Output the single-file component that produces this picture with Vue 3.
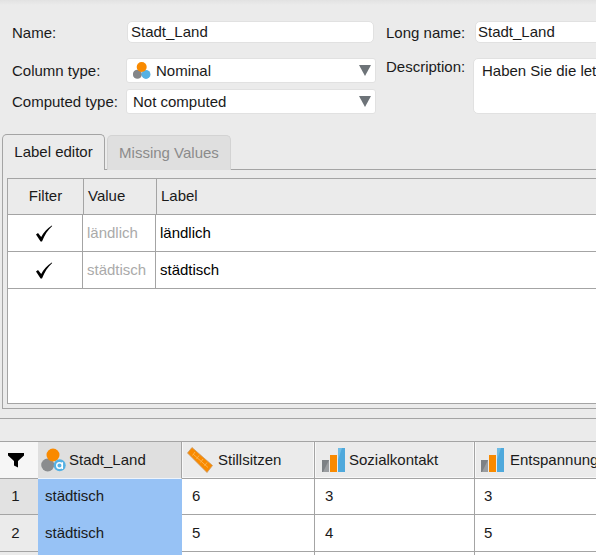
<template>
  <div class="app">
    <div class="form">
      <div class="form-left">
        <div class="field name-field">
          <label class="name-label">Name:</label>
          <div class="input name-input">Stadt_Land</div>
        </div>
        <div class="field type-field">
          <label class="type-label">Column type:</label>
          <div class="combo">
            <svg class="nominal-icon" width="18" height="18" viewBox="0 0 18 18">
              <circle cx="4.4" cy="12.2" r="4.5" fill="#848688" />
              <circle cx="13" cy="12.4" r="4.5" fill="#55b1e3" />
              <circle cx="8.7" cy="5" r="5" fill="#f98a00" />
            </svg>
            <span>Nominal</span>
            <i class="arrow"></i>
          </div>
        </div>
        <div class="field computed-field">
          <label class="type-label">Computed type:</label>
          <div class="combo">
            <span>Not computed</span>
            <i class="arrow"></i>
          </div>
        </div>
      </div>
      <div class="form-right">
        <div class="field name-field">
          <label class="long-label">Long name:</label>
          <div class="input long-input">Stadt_Land</div>
        </div>
        <div class="field desc-field">
          <label class="desc-label">Description:</label>
          <div class="textarea">Haben Sie die let</div>
        </div>
      </div>
    </div>

    <div class="tabs">
      <div class="tab active">Label editor</div>
      <div class="tab">Missing Values</div>
    </div>
    <div class="panel">
      <div class="labels">
        <div class="labels-head">
          <div class="lh-filter">Filter</div>
          <div class="lh-value">Value</div>
          <div class="lh-label">Label</div>
        </div>
        <div v-for="row in labels" :key="row" class="labels-row">
          <div class="lr-filter">
            <svg width="18" height="17" viewBox="0 0 18 17">
              <path d="M1 9.5 L3 8 L6.2 12 C8.5 7.5 12 3.5 16.8 0.5 L17.2 1 C12.8 5 9.5 10 7 16.5 L5.6 16.5 Z" fill="#000" />
            </svg>
          </div>
          <div class="lr-value">{{ row }}</div>
          <div class="lr-label">{{ row }}</div>
        </div>
      </div>
    </div>

    <div class="splitter"></div>

    <div class="data">
      <div class="data-head">
        <div class="corner">
          <svg width="18" height="16" viewBox="0 0 18 16">
            <path d="M1 1 H17 V3.5 L11 9 V15.5 L7 13.5 V9 L1 3.5 Z" fill="#000" />
          </svg>
        </div>
        <div v-for="col in columns" :key="col.name" class="col-head" :class="col.cls">
          <svg v-if="col.icon === 'nominal'" class="head-icon" width="25" height="24" viewBox="0 0 25 24">
            <circle cx="6.7" cy="17" r="6.5" fill="#8a8c8e" />
            <circle cx="12" cy="7" r="6.5" fill="#f98a00" />
            <circle cx="18.7" cy="17.3" r="6" fill="#55b1e3" />
            <circle cx="18.5" cy="17.5" r="2.8" fill="none" stroke="#fff" stroke-width="1.4" />
            <path d="M21.4 14.2 V21" stroke="#fff" stroke-width="1.3" />
          </svg>
          <svg v-else-if="col.icon === 'ruler'" class="head-icon" width="26" height="26" viewBox="0 0 26 26">
            <path d="M5 0.5 L25.5 18.5 L20 25.5 L0.5 6 Z" fill="#f98a00" stroke="#c99a66" stroke-width="0.8" />
            <path d="M6 7 L21 20.5 M8 5 L5.5 8.5 M12 8.5 L9.5 12 M16 12 L13.5 15.5 M20 15.5 L17.5 19" stroke="#fbb24f" stroke-width="1" fill="none" />
          </svg>
          <svg v-else class="head-icon" width="23" height="24" viewBox="0 0 23 24">
            <rect x="0" y="12" width="7" height="12" fill="#7d8185" />
            <path d="M7 12 V24 H1 Z" fill="#9a9da0" />
            <rect x="8" y="7" width="7" height="17" fill="#f98a00" />
            <rect x="16" y="0" width="7" height="24" fill="#4fa9dc" />
            <path d="M16 0 H20 L16 12 Z" fill="#6fbde6" />
          </svg>
          <span>{{ col.name }}</span>
        </div>
      </div>
      <div v-for="(row, i) in rows" :key="i" class="data-row" :class="'row-' + (i + 1)">
        <div class="row-num">{{ row.length ? i + 1 : '' }}</div>
        <div class="cell selected">{{ row.length ? 'städtisch' : '' }}</div>
        <div v-for="(col, j) in columns.slice(1)" :key="j" class="cell" :class="col.cls">{{ row[j] }}</div>
      </div>
    </div>
  </div>
</template>

<script setup>
const labels = ['ländlich', 'städtisch']

const columns = [
  { name: 'Stadt_Land', icon: 'nominal', cls: 'col-a' },
  { name: 'Stillsitzen', icon: 'ruler', cls: 'col-b' },
  { name: 'Sozialkontakt', icon: 'bars', cls: 'col-c' },
  { name: 'Entspannung', icon: 'bars', cls: 'col-d' }
]

// the third row only peeks in at the bottom edge
const rows = [
  [6, 3, 3],
  [5, 4, 5],
  []
]
</script>

<style>
html, body {
  margin: 0;
  background: #ebebeb;
}
</style>

<style scoped>
.app {
  width: 596px;
  height: 555px;
  overflow: hidden;
  background: linear-gradient(#e2e2e2, #ebebeb 5px);
  font-family: "Liberation Sans", Arial, sans-serif;
  font-size: 15px;
  color: #1a1a1a;
}

.form {
  display: flex;
  height: 134px;
  box-sizing: border-box;
  padding: 21px 0 0 12px;
}

.form-left {
  width: 374px;
  flex: none;
}

.form-right {
  flex: none;
  width: 300px;
}

.field {
  display: flex;
}

.name-field {
  height: 22px;
  align-items: center;
}

.name-label {
  width: 115px;
  flex: none;
}

.long-label {
  width: 89px;
  flex: none;
}

.input {
  box-sizing: border-box;
  height: 22px;
  line-height: 20px;
  padding-left: 2px;
  background: #fff;
  border: 1px solid #e1e1e1;
  border-radius: 5px;
}

.name-input {
  width: 247px;
  padding-left: 3px;
}

.long-input {
  width: 200px;
}

.type-field {
  margin-top: 15px;
  align-items: center;
}

.computed-field {
  margin-top: 6px;
  align-items: center;
}

.type-label {
  width: 114px;
  flex: none;
}

.combo {
  position: relative;
  display: flex;
  align-items: center;
  box-sizing: border-box;
  width: 250px;
  height: 25px;
  padding-left: 6px;
  background: #fff;
  border: 1px solid #e1e1e1;
  border-radius: 3px;
}

.nominal-icon {
  margin-right: 5px;
}

.arrow {
  position: absolute;
  right: 4px;
  top: 6px;
  width: 0;
  height: 0;
  border-left: 6.5px solid transparent;
  border-right: 6.5px solid transparent;
  border-top: 11px solid #6d7378;
}

.desc-field {
  margin-top: 15px;
}

.desc-label {
  width: 87px;
  flex: none;
  line-height: 17px;
}

.textarea {
  box-sizing: border-box;
  width: 200px;
  height: 56px;
  padding: 3px 8px;
  line-height: 18px;
  white-space: nowrap;
  overflow: hidden;
  background: #fff;
  border: 1px solid #e1e1e1;
  border-radius: 5px;
}

.tabs {
  display: flex;
  height: 35px;
  padding-left: 2px;
  gap: 2px;
}

.tab {
  box-sizing: border-box;
  height: 35px;
  width: 124px;
  margin-top: 1px;
  line-height: 34px;
  text-align: center;
  color: #8b8b8b;
  background: #dfdfdf;
  border: 1px solid #d3d3d3;
  border-bottom: none;
  border-radius: 5px 5px 0 0;
}

.tab.active {
  width: 103px;
  height: 36px;
  margin-top: 0;
  position: relative;
  z-index: 1;
  color: #1a1a1a;
  background: #ebebeb;
  border-color: #a4a4a4;
}

.panel {
  box-sizing: border-box;
  height: 240px;
  margin-left: 2px;
  padding: 8px 0 4px 4px;
  background: #ebebeb;
  border: 1px solid #a4a4a4;
  border-right: none;
}

.labels {
  box-sizing: border-box;
  height: 226px;
  background: #fff;
  border: 1px solid #a4a4a4;
  border-right: none;
}

.labels-head {
  display: flex;
  height: 36px;
  box-sizing: border-box;
  align-items: center;
  background: #ebebeb;
  border-bottom: 1px solid #a4a4a4;
}

.labels-head > div {
  box-sizing: border-box;
  height: 100%;
  line-height: 33px;
}

.lh-filter {
  width: 76px;
  text-align: center;
  border-right: 1px solid #a4a4a4;
}

.lh-value {
  width: 73px;
  padding-left: 4px;
  border-right: 1px solid #a4a4a4;
}

.lh-label {
  padding-left: 4px;
}

.labels-row {
  display: flex;
  height: 37px;
  box-sizing: border-box;
  border-bottom: 1px solid #a4a4a4;
  color: #000;
}

.labels-row > div {
  box-sizing: border-box;
  line-height: 36px;
}

.lr-filter {
  width: 75px;
  display: flex;
  align-items: center;
  justify-content: center;
  padding-right: 2px;
  border-right: 1px solid #a4a4a4;
}

.lr-value {
  width: 73px;
  padding-left: 4px;
  color: #aaa;
  border-right: 1px solid #a4a4a4;
}

.lr-label {
  padding-left: 4px;
}

.splitter {
  height: 24px;
  margin-top: 9px;
  box-sizing: border-box;
  border-top: 1px solid #a4a4a4;
  border-bottom: 1px solid #a4a4a4;
}

.data {
  background: #fff;
  height: 113px;
}

.data-head,
.data-row {
  display: flex;
  box-sizing: border-box;
  border-bottom: 1px solid #a4a4a4;
}

.data-head {
  height: 37px;
  background: #ebebeb;
}

.row-1 {
  height: 36px;
}

.row-2,
.row-3 {
  height: 37px;
}

.corner {
  width: 38px;
  flex: none;
  display: flex;
  align-items: center;
  justify-content: center;
  padding-right: 6px;
  box-sizing: border-box;
  background: #f6f6f6;
}

.col-head {
  display: flex;
  align-items: center;
  flex: none;
  box-sizing: border-box;
  border-right: 1px solid #a4a4a4;
  box-shadow: inset 1px 0 #f8f8f8, inset -1px -1px #f8f8f8;
}

.col-head span {
  margin-bottom: 2px;
}

.col-a { width: 144px; }
.col-b { width: 133px; }
.col-c { width: 160px; }
.col-d { width: 160px; }

.col-head.col-a {
  height: 37px;
  padding-left: 3px;
  background: #dfdfdf;
  border-bottom: 1px solid #eef4fb;
  box-shadow: none;
}

.col-head.col-b {
  padding-left: 5px;
}

.col-head.col-c {
  padding-left: 7px;
}

.col-head.col-d {
  padding-left: 6px;
}

.head-icon {
  margin-right: 4px;
  flex: none;
}

.col-a .head-icon {
  margin-right: 3px;
}

.col-b .head-icon {
  margin-right: 5px;
}

.col-d .head-icon {
  margin-right: 6px;
}

.row-num {
  width: 38px;
  flex: none;
  box-sizing: border-box;
  padding-right: 7px;
  text-align: center;
  line-height: 33px;
  background: #ebebeb;
}

.row-1 .row-num {
  background: #e2e2e2;
}

.row-2 .row-num,
.row-2 .cell {
  line-height: 35px;
}

.cell {
  flex: none;
  box-sizing: border-box;
  line-height: 33px;
  padding-left: 10px;
  border-right: 1px solid #a4a4a4;
}

.cell.col-d {
  padding-left: 9px;
}

.cell.selected {
  width: 144px;
  padding-left: 7px;
  height: calc(100% + 1px);
  background: #97c2f5;
  border-right: none;
}
</style>
